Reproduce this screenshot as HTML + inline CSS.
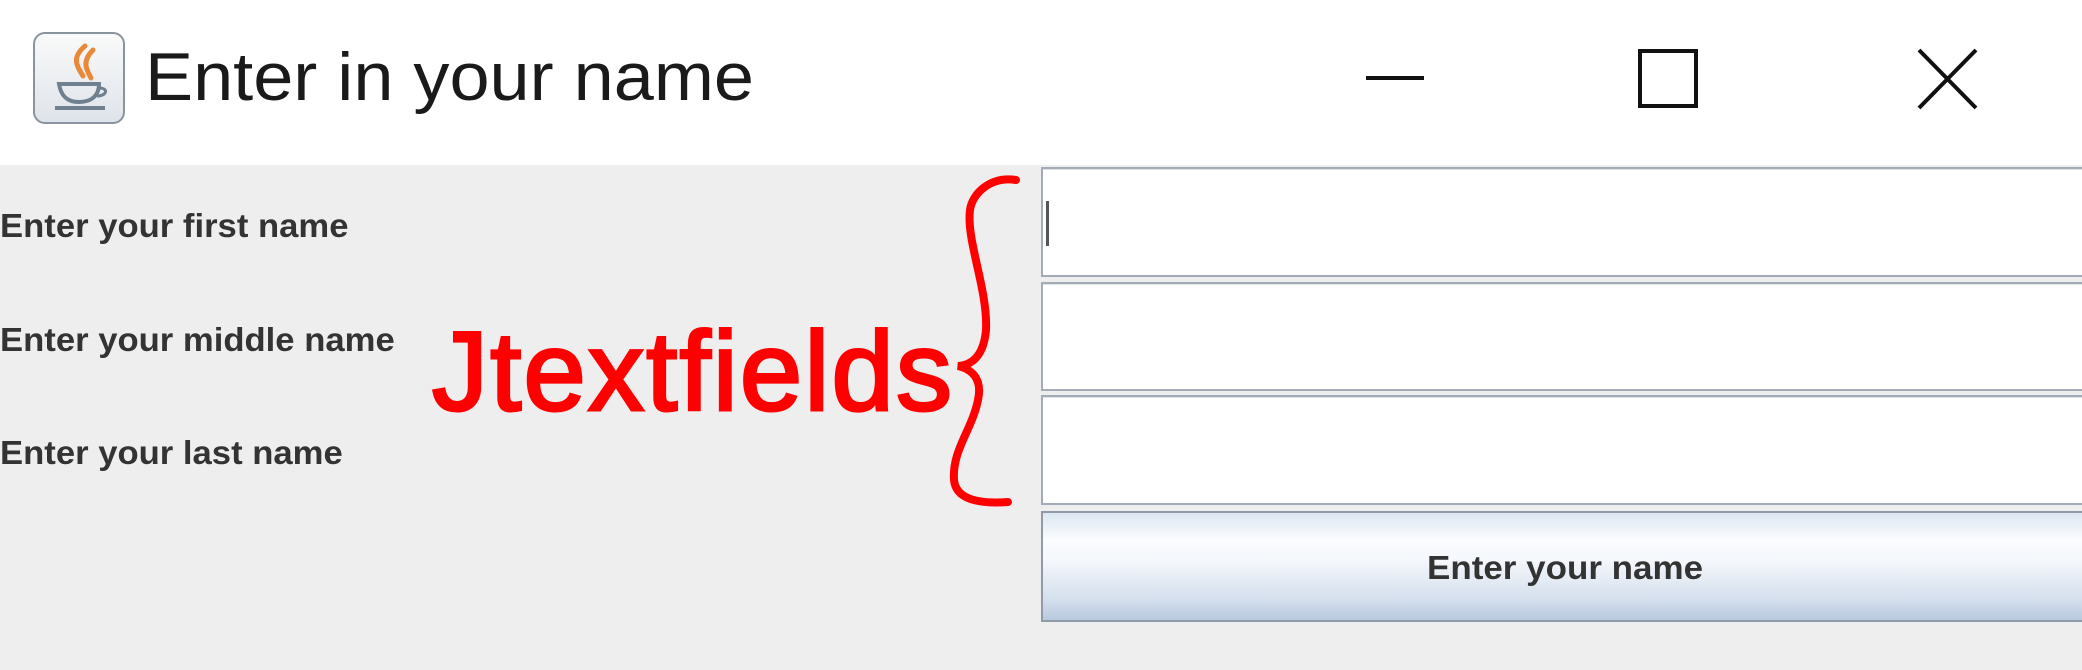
<!DOCTYPE html>
<html><head><meta charset="utf-8"><style>
html,body{margin:0;padding:0;width:2082px;height:670px;overflow:hidden;background:#fff;font-family:"Liberation Sans",sans-serif;}
.abs{position:absolute;}
.title{left:145px;top:38px;font-size:68px;color:#1a1a1a;white-space:nowrap;transform:scaleX(1.06);transform-origin:0 0;}
.panel{left:0;top:165px;width:2082px;height:505px;background:#eeeeee;}
.lbl{position:absolute;left:0;font-weight:bold;font-size:33px;color:#333;white-space:nowrap;transform-origin:0 0;}
.tf{position:absolute;left:1041px;width:1050px;background:#fff;border:2px solid #a3acb6;box-sizing:border-box;box-shadow:inset 0 1px 0 #dfe3e8;}
.btn{position:absolute;left:1041px;top:511px;width:1050px;height:111px;box-sizing:border-box;border:2px solid #8f9ba8;background:linear-gradient(#dde6f1 0%,#fafcfe 25%,#f4f7fb 45%,#d5e0ee 80%,#b8c9de 100%);font-weight:bold;font-size:33px;color:#333;}
</style></head><body>
<div class="abs" style="left:33px;top:32px;width:92px;height:92px;border:2px solid #8a949e;border-radius:12px;box-sizing:border-box;background:linear-gradient(#fafafa,#dfe4ea);"></div>
<svg class="abs" style="left:33px;top:32px" width="92" height="92">
<path d="M52 14 C38 26 44 34 50 44 M60 18 C48 30 54 38 58 46" stroke="#e8893a" stroke-width="5" fill="none" stroke-linecap="round"/>
<path d="M26 52 H66 C66 64 58 70 46 70 C34 70 28 64 26 52 Z" fill="none" stroke="#6f8191" stroke-width="4"/>
<path d="M66 56 C76 56 74 64 64 64" fill="none" stroke="#6f8191" stroke-width="3"/>
<path d="M22 76 H72" stroke="#6f8191" stroke-width="4"/>
</svg>
<div class="abs title">Enter in your name</div>
<div class="abs" style="left:1366px;top:76px;width:58px;height:4px;background:#111;"></div>
<div class="abs" style="left:1638px;top:49px;width:60px;height:59px;border:4px solid #111;box-sizing:border-box;"></div>
<svg class="abs" style="left:1915px;top:47px" width="66" height="64"><path d="M4 3 L61 61 M61 3 L4 61" stroke="#111" stroke-width="4"/></svg>
<div class="abs panel">
<div class="lbl" style="top:42px;transform:scaleX(1.05)">Enter your first name</div>
<div class="lbl" style="top:156px;transform:scaleX(1.05)">Enter your middle name</div>
<div class="lbl" style="top:269px;transform:scaleX(1.05)">Enter your last name</div>
</div>
<div class="tf" style="top:167px;height:110px;"></div>
<div class="abs" style="left:1046px;top:201px;width:3px;height:45px;background:#555;"></div>
<div class="tf" style="top:282px;height:109px;"></div>
<div class="tf" style="top:395px;height:110px;"></div>
<div class="btn"><div style="position:absolute;left:384px;top:36px;white-space:nowrap;transform:scaleX(1.06);transform-origin:0 0">Enter your name</div></div>
<svg class="abs" style="left:0;top:0" width="2082" height="670">
<text x="432" y="410" font-family="Liberation Sans, sans-serif" font-size="112" fill="#ff0000" stroke="#ff0000" stroke-width="3" textLength="520" lengthAdjust="spacing">Jtextfields</text>
<path d="M1016 180 C990 176 972 194 970 210 C966 240 988 290 986 330 C984 352 975 365 958 366 C975 370 982 382 978 400 C972 430 952 450 954 480 C956 500 980 504 1008 502" stroke="#ff0000" stroke-width="8" fill="none" stroke-linecap="round"/>
</svg>
</body></html>
